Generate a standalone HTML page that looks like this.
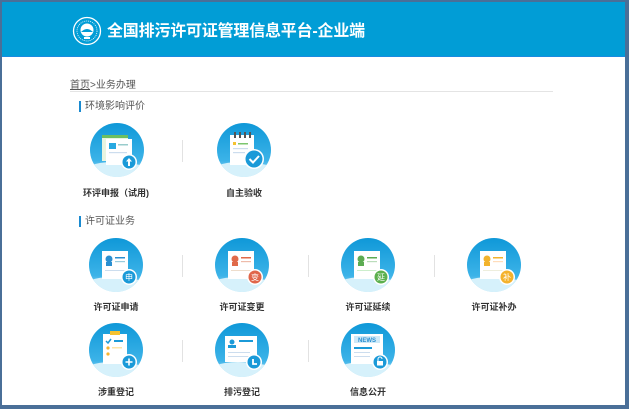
<!DOCTYPE html>
<html><head><meta charset="utf-8"><style>
*{margin:0;padding:0;box-sizing:border-box}
body{width:629px;height:409px;overflow:hidden;background:#fff;font-family:"Liberation Sans","Noto Sans CJK SC",sans-serif;position:relative}
.frame{position:absolute;left:0;top:0;width:629px;height:409px;border:2px solid #4a6f98;border-right-width:4px;border-bottom-width:4px}
.hdr{position:absolute;left:2px;top:2px;width:623px;height:55px;background:#019dd6;border-bottom:1px solid #1a8ae0}
.title{position:absolute;left:105px;top:15px;color:#fff;font-size:16px;font-weight:bold;letter-spacing:-0.2px;white-space:nowrap}
.crumb{position:absolute;left:70px;top:76px;font-size:10px;color:#555}
.crumb u{text-decoration:underline}
.line{position:absolute;left:70px;top:91px;width:483px;height:1px;background:#e4e4e4}
.sec{position:absolute;left:79px;font-size:10px;color:#555;border-left:2px solid #1a8ad0;padding-left:4px;line-height:11px}
.it{position:absolute;width:120px;text-align:center;font-size:9px;font-weight:bold;color:#333}
.ic{position:absolute;width:56px;height:56px}
.sep{position:absolute;width:1px;height:22px;background:#e2e2e2}
</style></head><body>
<div class="hdr">
<svg style="position:absolute;left:70px;top:14px" width="30" height="30" viewBox="0 0 30 30"><circle cx="15" cy="15" r="13.5" fill="none" stroke="#fff" stroke-width="1.3"/><circle cx="15" cy="15" r="10" fill="none" stroke="#fff" stroke-width="0.8" stroke-dasharray="1 1"/><circle cx="15" cy="14" r="6.5" fill="#fff"/><path d="M9 16 Q15 10 21 16 Z" fill="#019dd6"/><rect x="12" y="21" width="6" height="2" fill="#fff"/></svg>
<div class="title">全国排污许可证管理信息平台-企业端</div>
</div>
<div class="crumb"><u>首页</u>&gt;业务办理</div>
<div class="line"></div>
<div class="sec" style="top:101px">环境影响评价</div>
<div class="sec" style="top:216px">许可证业务</div>

<svg width="0" height="0" style="position:absolute"><defs>
<linearGradient id="g" x1="0" y1="0" x2="0" y2="1"><stop offset="0" stop-color="#0f98d8"/><stop offset="0.7" stop-color="#3cb3e8"/><stop offset="1" stop-color="#bfe8f8"/></linearGradient>
<clipPath id="c"><circle cx="28" cy="28" r="27"/></clipPath>
<g id="base"><circle cx="28" cy="28" r="27" fill="url(#g)"/><path d="M0 44 Q20 36 56 44 L56 56 L0 56Z" fill="#d6f1fb" clip-path="url(#c)"/></g>
</defs></svg>

<svg class="ic" style="left:89px;top:122px" viewBox="0 0 56 56"><use href="#base"/><rect x="13" y="13" width="26" height="26" fill="#e8f4e0"/><rect x="13" y="13" width="26" height="3" fill="#6cbf60"/><rect x="17" y="17" width="26" height="26" fill="#fff"/><rect x="20" y="21" width="7" height="6" fill="#27a9e1"/><rect x="29" y="22" width="10" height="1.5" fill="#9cc"/><rect x="20" y="30" width="18" height="1.2" fill="#cde"/><circle cx="40" cy="40" r="8" fill="#fff"/><circle cx="40" cy="40" r="6.5" fill="#1b9ad8"/><path d="M40 36 L37 39.5 H39 V44 H41 V39.5 H43Z" fill="#fff"/></svg>
<div class="it" style="left:56px;top:186px">环评申报（试用)</div>
<div class="sep" style="left:182px;top:140px"></div>
<svg class="ic" style="left:216px;top:122px" viewBox="0 0 56 56"><use href="#base"/><rect x="14" y="13" width="24" height="30" fill="#fff"/><g fill="#555"><rect x="18" y="10" width="2" height="6"/><rect x="23" y="10" width="2" height="6"/><rect x="28" y="10" width="2" height="6"/><rect x="33" y="10" width="2" height="6"/></g><rect x="17" y="20" width="3" height="3" fill="#f5c230"/><rect x="22" y="21" width="10" height="1.5" fill="#7cc66e"/><rect x="17" y="26" width="15" height="1.2" fill="#cde"/><rect x="17" y="30" width="12" height="1.2" fill="#cde"/><circle cx="38" cy="37" r="10" fill="#fff"/><circle cx="38" cy="37" r="8.5" fill="#1b9ad8"/><path d="M33.5 37 L37 40.5 L43 34" stroke="#fff" stroke-width="2" fill="none"/></svg>
<div class="it" style="left:184px;top:186px">自主验收</div>

<svg class="ic" style="left:88px;top:237px" viewBox="0 0 56 56"><use href="#base"/><rect x="14" y="14" width="26" height="28" fill="#fff"/><circle cx="21" cy="22" r="3.5" fill="#2a8fd0"/><rect x="18" y="25" width="6" height="4" fill="#2a8fd0"/><rect x="27" y="20" width="10" height="1.5" fill="#2a8fd0"/><rect x="27" y="24" width="10" height="1.2" fill="#9cd"/><rect x="17" y="33" width="20" height="1" fill="#cde"/><circle cx="41" cy="40" r="8" fill="#fff"/><circle cx="41" cy="40" r="6.5" fill="#1b9ad8"/><text x="41" y="43" font-size="8" fill="#fff" text-anchor="middle" font-family="Noto Sans CJK SC">申</text></svg>
<div class="it" style="left:56px;top:300px">许可证申请</div>
<div class="sep" style="left:182px;top:255px"></div>
<svg class="ic" style="left:214px;top:237px" viewBox="0 0 56 56"><use href="#base"/><rect x="14" y="14" width="26" height="28" fill="#fff"/><circle cx="21" cy="22" r="3.5" fill="#e06a4a"/><rect x="18" y="25" width="6" height="4" fill="#e06a4a"/><rect x="27" y="20" width="10" height="1.5" fill="#e06a4a"/><rect x="27" y="24" width="10" height="1.2" fill="#eba"/><rect x="17" y="33" width="20" height="1" fill="#edc"/><circle cx="41" cy="40" r="8" fill="#fff"/><circle cx="41" cy="40" r="6.5" fill="#e0664a"/><text x="41" y="43" font-size="8" fill="#fff" text-anchor="middle" font-family="Noto Sans CJK SC">变</text></svg>
<div class="it" style="left:182px;top:300px">许可证变更</div>
<div class="sep" style="left:308px;top:255px"></div>
<svg class="ic" style="left:340px;top:237px" viewBox="0 0 56 56"><use href="#base"/><rect x="14" y="14" width="26" height="28" fill="#fff"/><circle cx="21" cy="22" r="3.5" fill="#5cab52"/><rect x="18" y="25" width="6" height="4" fill="#5cab52"/><rect x="27" y="20" width="10" height="1.5" fill="#5cab52"/><rect x="27" y="24" width="10" height="1.2" fill="#bdb"/><rect x="17" y="33" width="20" height="1" fill="#cec"/><circle cx="41" cy="40" r="8" fill="#fff"/><circle cx="41" cy="40" r="6.5" fill="#5cb04e"/><text x="41" y="43" font-size="8" fill="#fff" text-anchor="middle" font-family="Noto Sans CJK SC">延</text></svg>
<div class="it" style="left:308px;top:300px">许可证延续</div>
<div class="sep" style="left:434px;top:255px"></div>
<svg class="ic" style="left:466px;top:237px" viewBox="0 0 56 56"><use href="#base"/><rect x="14" y="14" width="26" height="28" fill="#fff"/><circle cx="21" cy="22" r="3.5" fill="#f2b32c"/><rect x="18" y="25" width="6" height="4" fill="#f2b32c"/><rect x="27" y="20" width="10" height="1.5" fill="#f2b32c"/><rect x="27" y="24" width="10" height="1.2" fill="#fdb"/><rect x="17" y="33" width="20" height="1" fill="#eed"/><circle cx="41" cy="40" r="8" fill="#fff"/><circle cx="41" cy="40" r="6.5" fill="#f4b22c"/><text x="41" y="43" font-size="8" fill="#fff" text-anchor="middle" font-family="Noto Sans CJK SC">补</text></svg>
<div class="it" style="left:434px;top:300px">许可证补办</div>

<svg class="ic" style="left:88px;top:322px" viewBox="0 0 56 56"><use href="#base"/><rect x="15" y="12" width="24" height="30" fill="#fff"/><rect x="22" y="9" width="10" height="4" fill="#f5c230"/><path d="M18 19 L20 21 L23 17" stroke="#1b9ad8" stroke-width="1.5" fill="none"/><rect x="26" y="18" width="9" height="2" fill="#1b9ad8"/><circle cx="20" cy="26" r="1.6" fill="#f5b430"/><rect x="24" y="25" width="10" height="1.5" fill="#fde5a8"/><circle cx="20" cy="32" r="1.6" fill="#f5b430"/><circle cx="41" cy="40" r="8" fill="#fff"/><circle cx="41" cy="40" r="6.5" fill="#1b9ad8"/><path d="M41 36.5 V43.5 M37.5 40 H44.5" stroke="#fff" stroke-width="1.6"/></svg>
<div class="it" style="left:56px;top:385px">涉重登记</div>
<div class="sep" style="left:182px;top:340px"></div>
<svg class="ic" style="left:214px;top:322px" viewBox="0 0 56 56"><use href="#base"/><rect x="11" y="14" width="32" height="26" fill="#fff"/><circle cx="18" cy="20" r="2.5" fill="#1b9ad8"/><rect x="14" y="23" width="8" height="3" fill="#1b9ad8"/><rect x="25" y="18" width="14" height="2" fill="#1b9ad8"/><rect x="14" y="30" width="22" height="1" fill="#cde"/><rect x="14" y="34" width="22" height="1" fill="#cde"/><circle cx="40" cy="40" r="8" fill="#fff"/><circle cx="40" cy="40" r="6.5" fill="#1b9ad8"/><path d="M39 37 V42 H43" stroke="#fff" stroke-width="1.8" fill="none"/></svg>
<div class="it" style="left:182px;top:385px">排污登记</div>
<div class="sep" style="left:308px;top:340px"></div>
<svg class="ic" style="left:340px;top:322px" viewBox="0 0 56 56"><use href="#base"/><rect x="11" y="12" width="32" height="30" fill="#fff"/><rect x="14" y="14" width="26" height="7" fill="#cde9f8"/><text x="27" y="20" font-size="6" font-weight="bold" fill="#2a8fd0" text-anchor="middle" font-family="Liberation Sans">NEWS</text><rect x="14" y="25" width="18" height="2" fill="#1b9ad8"/><rect x="14" y="30" width="16" height="1" fill="#cde"/><rect x="14" y="34" width="16" height="1" fill="#cde"/><circle cx="40" cy="40" r="8" fill="#fff"/><circle cx="40" cy="40" r="6.5" fill="#1b9ad8"/><rect x="37" y="39" width="6" height="4.5" fill="#fff"/><path d="M38 39 V37 A2 2 0 0 1 42 37" stroke="#fff" fill="none"/></svg>
<div class="it" style="left:308px;top:385px">信息公开</div>

<div class="frame"></div>
</body></html>
